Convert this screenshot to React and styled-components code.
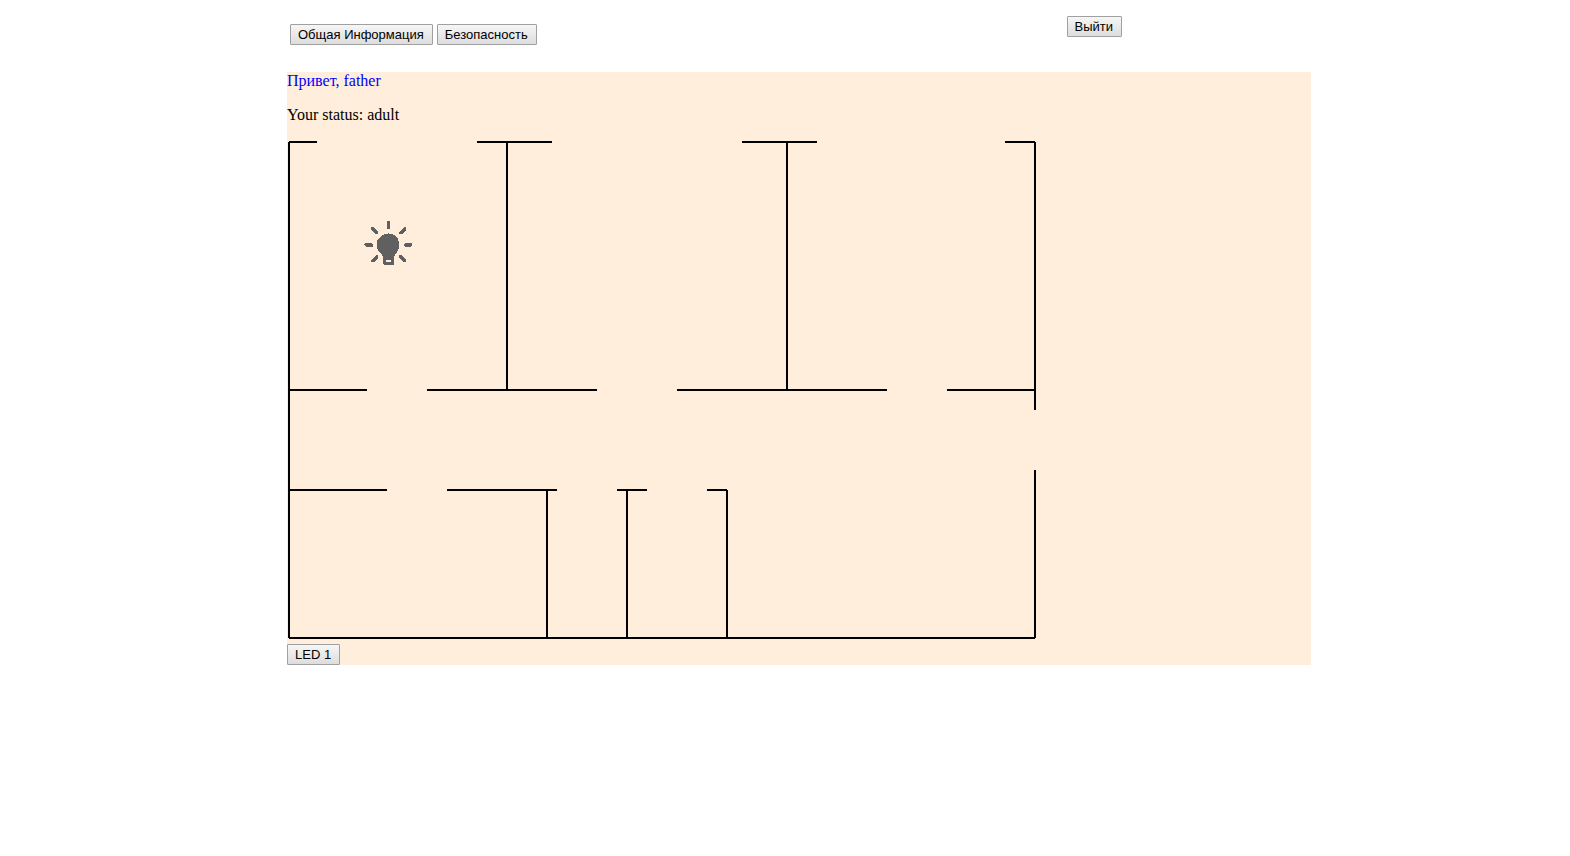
import React from "react";
import styled, { createGlobalStyle } from "styled-components";

const GlobalStyle = createGlobalStyle`
  body {
    margin: 0;
    background: #ffffff;
    color: #000000;
    font-family: "Liberation Serif", "Times New Roman", serif;
    font-size: 16px;
    line-height: 18px;
  }
`;

const Page = styled.div`
  box-sizing: border-box;
  width: 100%;
  max-width: 1052px;
  margin: 0 auto;
  padding: 16px 0 0 28px;
`;

const Header = styled.header`
  display: flex;
  justify-content: space-between;
  align-items: flex-start;
  height: 56px;
  padding: 0 189px 0 3px;
`;

const Menu = styled.nav`
  display: flex;
  gap: 4px;
  padding-top: 8px;
`;

const Button = styled.button`
  box-sizing: border-box;
  display: block;
  height: 21px;
  padding: 0 8px 0 7px;
  border: 1px solid #a0a0a0;
  border-radius: 1px;
  background: linear-gradient(#f6f6f6, #dddddd);
  color: #000000;
  font-family: "Liberation Sans", Arial, sans-serif;
  font-size: 13px;
  line-height: 19px;
  white-space: nowrap;
`;

const Panel = styled.main`
  background: #ffeedb;
`;

const Greeting = styled.p`
  margin: 0 0 16px;
  color: #0000ff;
`;

const Status = styled.p`
  margin: 0 0 16px;
`;

const Plan = styled.svg`
  display: block;
  width: 750px;
  height: 500px;
  margin-bottom: 4px;
`;

const walls = [
  "M2 2H30M190 2H265M455 2H530M718 2H748",
  "M2 2V498M220 2V250M500 2V250M748 2V270M748 330V498",
  "M2 250H80M140 250H310M390 250H600M660 250H748",
  "M2 350H100M160 350H270M330 350H360M420 350H440",
  "M260 350V498M340 350V498M440 350V498M2 498H748",
];

function Lamp() {
  return (
    <g transform="translate(77 80)" fill="#606060" shapeRendering="crispEdges">
      <path d="M24 13H25V14H28L32 16L34 19L35 22V28L33 32L31 35L30 37V44L29 45H20L19 44V37L18 35L15 32L13 28V22L14 19L17 16L21 14H24Z" />
      <rect x="22" y="40" width="5" height="2" fill="#ffeedb" />
      <path d="M23 1H26V9H23Z" />
      <path d="M0 24L1 23H7L9 24V26L8 27H2L0 25Z" />
      <path d="M48 24L47 23H42L40 24V26L41 27H46L48 25Z" />
      <path d="M7 7H9L14 12V14H11L7 10Z" />
      <path d="M42 7H40L35 12V14H38L42 10Z" />
      <path d="M7 42H10L14 38V35H12L7 40Z" />
      <path d="M42 42H39L35 38V35H37L42 40Z" />
    </g>
  );
}

export default function App() {
  return (
    <>
      <GlobalStyle />
      <Page>
        <Header>
          <Menu>
            <Button type="button">Общая Информация</Button>
            <Button type="button">Безопасность</Button>
          </Menu>
          <Button type="button">Выйти</Button>
        </Header>
        <Panel>
          <Greeting>Привет, father</Greeting>
          <Status>Your status: adult</Status>
          <Plan viewBox="0 0 750 500" role="img" aria-label="План дома">
            <path d={walls.join("")} stroke="#000000" strokeWidth="2" fill="none" />
            <Lamp />
          </Plan>
          <Button type="button">LED 1</Button>
        </Panel>
      </Page>
    </>
  );
}
